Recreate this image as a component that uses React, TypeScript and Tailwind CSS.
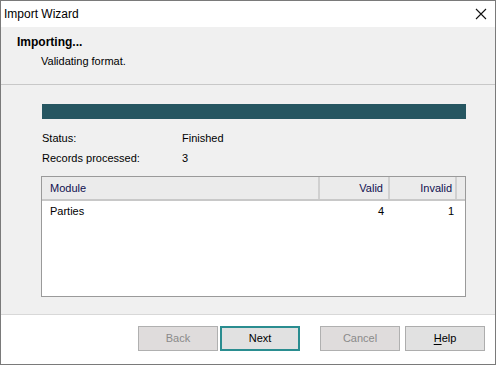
import React from "react";

export default function App() {
  const font = { fontFamily: '"Segoe UI", "Liberation Sans", Arial, sans-serif' };
  return (
    <div
      className="w-[496px] h-[365px] flex flex-col border border-[#7a7a7a] bg-white text-[11px] text-black overflow-hidden"
      style={font}
    >
      {/* Title bar */}
      <div className="h-[26px] flex items-center justify-between bg-white pl-[3px] pr-[7px] shrink-0">
        <span className="text-[12px] leading-none">Import Wizard</span>
        <svg width="12" height="12" viewBox="0 0 12 12" className="mr-[1px]">
          <path d="M1 1 L11 11 M11 1 L1 11" stroke="#111" strokeWidth="1.1" />
        </svg>
      </div>
      {/* Header */}
      <div className="h-[58px] bg-[#f0f0f0] border-b border-[#c8c8c8] shrink-0 pl-[16px] pt-[7px]">
        <div className="font-bold text-[12px] leading-[16px]">Importing...</div>
        <div className="pl-[24px] leading-[16px] mt-[3px]">Validating format.</div>
      </div>
      {/* Body */}
      <div className="h-[230px] bg-[#f0f0f0] shrink-0 border-b border-[#d8d8d8] pl-[40px] pr-[29px] pt-[19px]">
        <div className="h-[15px] bg-[#265661] ml-[1px]" />
        <div className="grid grid-cols-[140px_1fr] mt-[9px] ml-[1px] leading-[20px]">
          <span>Status:</span>
          <span>Finished</span>
          <span>Records processed:</span>
          <span>3</span>
        </div>
        <div className="mt-[8px] h-[121px] border border-[#9a9a9a] bg-white">
          <div className="h-[24px] flex bg-[#ebebeb] border-b-2 border-[#c8c8c8]">
            <div className="w-[276px] pl-[8px] flex items-center text-[#101050]">Module</div>
            <div className="w-[70px] border-l-2 border-[#d0d0d0] flex items-center justify-end pr-[5px] text-[#101050]">Valid</div>
            <div className="w-[69px] border-l-2 border-[#d0d0d0] border-r-2 flex items-center justify-end pr-[3px] text-[#101050]">Invalid</div>
          </div>
          <div className="h-[20px] flex">
            <div className="w-[276px] pl-[8px] flex items-center">Parties</div>
            <div className="w-[70px] flex items-center justify-end pr-[4px]">4</div>
            <div className="w-[69px] flex items-center justify-end pr-[3px]">1</div>
          </div>
        </div>
      </div>
      {/* Footer */}
      <div className="flex-1 bg-white flex items-start pt-[11px] pl-[137px]">
        <button className="w-[80px] h-[25px] bg-[#dfdcdc] border border-[#b0b0b0] text-[#8a8a8a]">Back</button>
        <button className="w-[80px] h-[25px] ml-[2px] bg-[#e1e1e1] border-2 border-[#2a8d90]">Next</button>
        <button className="w-[80px] h-[25px] ml-[20px] bg-[#dfdcdc] border border-[#b0b0b0] text-[#8a8a8a]">Cancel</button>
        <button className="w-[80px] h-[25px] ml-[5px] bg-[#e1e1e1] border border-[#adadad]">
          <span className="underline underline-offset-2">H</span>elp
        </button>
      </div>
    </div>
  );
}
